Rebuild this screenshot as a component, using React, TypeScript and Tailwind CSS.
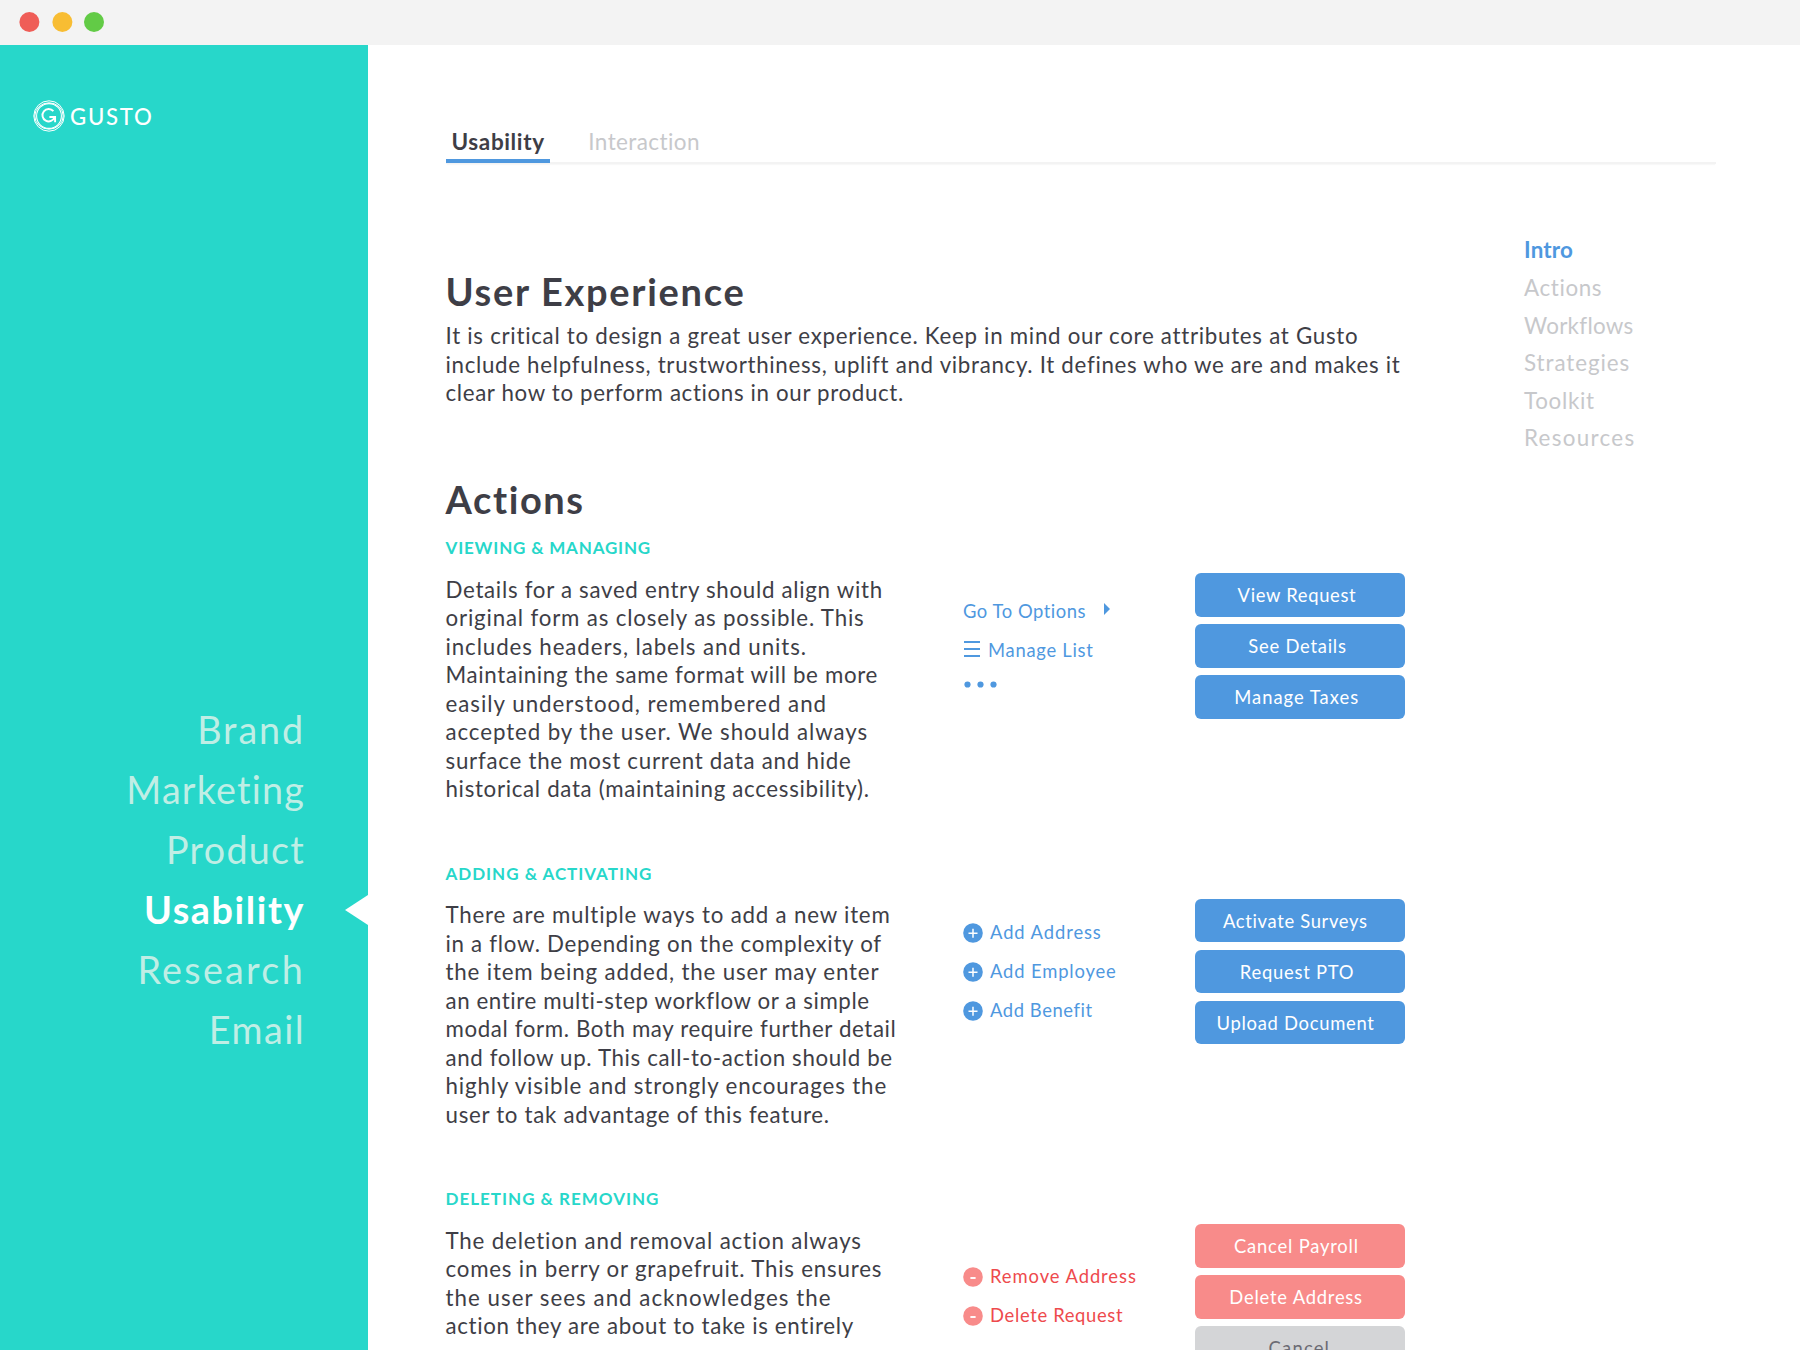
import type { ReactNode } from "react";

type Line = [text: string, tracking: string];

const sideNav: Line[] = [
  ["Brand", "tracking-[1.9px]"],
  ["Marketing", "tracking-[1.2px]"],
  ["Product", "tracking-[1.24px]"],
  ["Usability", "tracking-[1.6px]"],
  ["Research", "tracking-[2.3px]"],
  ["Email", "tracking-[1.45px]"],
];

const pageNav: Line[] = [
  ["Intro", "tracking-[0.2px]"],
  ["Actions", "tracking-[0.62px]"],
  ["Workflows", "tracking-[0.28px]"],
  ["Strategies", "tracking-[0.92px]"],
  ["Toolkit", "tracking-[0.68px]"],
  ["Resources", "tracking-[1.3px]"],
];

const intro: Line[] = [
  ["It is critical to design a great user experience. Keep in mind our core attributes at Gusto", "tracking-[0.72px]"],
  ["include helpfulness, trustworthiness, uplift and vibrancy. It defines who we are and makes it", "tracking-[0.69px]"],
  ["clear how to perform actions in our product.", "tracking-[0.65px]"],
];

const viewing: Line[] = [
  ["Details for a saved entry should align with", "tracking-[0.7px]"],
  ["original form as closely as possible. This", "tracking-[0.82px]"],
  ["includes headers, labels and units.", "tracking-[0.9px]"],
  ["Maintaining the same format will be more", "tracking-[0.67px]"],
  ["easily understood, remembered and", "tracking-[0.99px]"],
  ["accepted by the user. We should always", "tracking-[0.91px]"],
  ["surface the most current data and hide", "tracking-[0.742px]"],
  ["historical data (maintaining accessibility).", "tracking-[0.678px]"],
];

const adding: Line[] = [
  ["There are multiple ways to add a new item", "tracking-[0.79px]"],
  ["in a flow. Depending on the complexity of", "tracking-[0.7px]"],
  ["the item being added, the user may enter", "tracking-[0.84px]"],
  ["an entire multi-step workflow or a simple", "tracking-[0.59px]"],
  ["modal form. Both may require further detail", "tracking-[0.62px]"],
  ["and follow up. This call-to-action should be", "tracking-[0.64px]"],
  ["highly visible and strongly encourages the", "tracking-[0.86px]"],
  ["user to tak advantage of this feature.", "tracking-[0.7px]"],
];

const deleting: Line[] = [
  ["The deletion and removal action always", "tracking-[0.83px]"],
  ["comes in berry or grapefruit. This ensures", "tracking-[0.79px]"],
  ["the user sees and acknowledges the", "tracking-[1.024px]"],
  ["action they are about to take is entirely", "tracking-[0.67px]"],
];

function Copy({ lines }: { lines: Line[] }) {
  return (
    <p className="text-[22.3px] leading-[28.5px] text-[#3e3e46]">
      {lines.map(([text, tracking]) => (
        <span key={text} className={`block whitespace-nowrap ${tracking}`}>
          {text}
        </span>
      ))}
    </p>
  );
}

function Section({ title, lines, links, buttons }: { title: Line; lines: Line[]; links: ReactNode; buttons: ReactNode }) {
  return (
    <section className="flex h-[325.5px]">
      <div className="w-[517.5px]">
        <h3 className={`mb-[17.2px] text-[17px] leading-5 font-bold whitespace-nowrap text-[#27d7ca] ${title[1]}`}>{title[0]}</h3>
        <Copy lines={lines} />
      </div>
      <div className="w-[232.4px]">{links}</div>
      <div className="flex w-[210px] flex-col gap-[7.5px] pt-[34.7px]">{buttons}</div>
    </section>
  );
}

function Button({ label, className, tone = "bg-[#4f98df] text-white" }: { label: string; className: string; tone?: string }) {
  return (
    <button className={`h-[43.5px] shrink-0 rounded-[6px] pt-[2px] text-center text-[18.4px] leading-[41.5px] whitespace-nowrap ${tone} ${className}`}>
      {label}
    </button>
  );
}

function BadgeLink({ label, tracking, kind }: { label: string; tracking: string; kind: "add" | "remove" }) {
  const add = kind === "add";
  return (
    <li className={`flex h-[39px] items-center gap-[7px] ${add ? "text-[#4f98df]" : "text-[#ee4a4d]"}`}>
      <svg width="20" height="20" viewBox="0 0 20 20" className="shrink-0">
        <circle cx="10" cy="10" r="9.8" fill={add ? "#4f98df" : "#f88b8a"} />
        {add ? (
          <path d="M10 5.8v9M5.5 10.3h9" stroke="#fff" strokeWidth="1.5" />
        ) : (
          <path d="M7.4 11h5.2" stroke="#fff" strokeWidth="1.9" />
        )}
      </svg>
      <span className={`text-[18.4px] leading-[39px] whitespace-nowrap ${tracking}`}>{label}</span>
    </li>
  );
}

function Logo() {
  return (
    <div className="ml-[33px] flex items-center">
      <svg width="32" height="32" viewBox="0 0 32 32" fill="none" stroke="#fff" className="shrink-0">
        <circle cx="16" cy="16" r="15.2" strokeWidth="1" />
        <ellipse cx="16" cy="16" rx="14.2" ry="13.2" strokeWidth="1" />
        <circle cx="16" cy="16" r="12.4" strokeWidth="1.1" />
        <path d="M20.4 11.2A6.2 6.2 0 1 0 21.6 17H16.4M19 17H22.1v5.2" strokeWidth="1.9" />
      </svg>
      <span className="ml-[5px] text-[22.2px] leading-[31px] font-medium tracking-[1.7px] text-white">GUSTO</span>
    </div>
  );
}

export default function App() {
  return (
    <div className="flex h-[1350px] w-[1800px] flex-col overflow-hidden bg-white font-['Lato',sans-serif]">
      <header className="flex h-[45px] shrink-0 items-center bg-[#f3f3f3] pb-px pl-[19px]">
        <svg width="86" height="20" viewBox="0 0 86 20">
          <circle cx="10.4" cy="10" r="10" fill="#ef5d57" />
          <circle cx="43.4" cy="10" r="10" fill="#f8bd33" />
          <circle cx="75" cy="10" r="10" fill="#62cb46" />
        </svg>
      </header>

      <div className="flex min-h-0 flex-1">
        <aside className="flex w-[368px] shrink-0 flex-col bg-[#27d7ca] pt-[55px]">
          <Logo />
          <nav className="mt-[568px]">
            {sideNav.map(([label, tracking]) =>
              label === "Usability" ? (
                <a key={label} className={`flex h-[60px] items-center justify-end text-[37.7px] leading-[60px] font-bold text-white ${tracking}`}>
                  {label}
                  <svg width="23" height="30" viewBox="0 0 23 30" className="ml-10">
                    <path d="M23 0v30L0 15z" fill="#fff" />
                  </svg>
                </a>
              ) : (
                <a key={label} className={`block h-[60px] pr-[63px] text-right text-[37.7px] leading-[60px] text-[#bfeee5] ${tracking}`}>
                  {label}
                </a>
              ),
            )}
          </nav>
        </aside>

        <main className="flex-1 pl-[77.5px]">
          <nav className="flex h-[119px] w-[1270px] items-end border-b-2 border-[#f3f3f3] text-[22.5px] leading-7 shadow-[0_2px_1px_-1px_#f8f8f8]">
            <a className="-mb-px h-[41px] w-[104.8px] border-b-4 border-[#4f98df] pt-[6px] pl-[6px] font-bold tracking-[0.62px] text-[#3e3e46]">Usability</a>
            <a className="ml-[38px] h-[40px] pt-[6px] tracking-[0.4px] text-[#c7c8cb]">Interaction</a>
          </nav>

          <div className="flex">
            <div className="w-[960px] shrink-0">
              <h1 className="mt-[105.4px] text-[38px] leading-[44px] font-bold tracking-[1.7px] text-[#3e3e46]">User Experience</h1>
              <div className="mt-[9px]">
                <Copy lines={intro} />
              </div>
              <h2 className="mt-[69.5px] mb-[17px] text-[38px] leading-[44px] font-bold tracking-[1.6px] text-[#3e3e46]">Actions</h2>

              <Section
                title={["VIEWING & MANAGING", "tracking-[0.82px]"]}
                lines={viewing}
                links={
                  <ul className="pt-[53.2px] text-[18.4px] leading-[39px] whitespace-nowrap text-[#4f98df]">
                    <li className="flex h-[39px] items-center tracking-[0.54px]">
                      Go To Options
                      <svg width="6" height="12" viewBox="0 0 6 12" className="ml-[18px] -translate-y-[2px]">
                        <path d="M0 0l6 6-6 6z" fill="currentColor" />
                      </svg>
                    </li>
                    <li className="flex h-[39px] items-center pl-px tracking-[0.73px]">
                      <svg width="16" height="16" viewBox="0 0 16 16" className="mr-2 -translate-y-px">
                        <path d="M0 1h16M0 8h16M0 15h16" stroke="currentColor" strokeWidth="2" />
                      </svg>
                      Manage List
                    </li>
                    <li className="pt-[11px] pl-px">
                      <svg width="34" height="7" viewBox="0 0 34 7" fill="currentColor">
                        <circle cx="3.5" cy="3.5" r="3.1" />
                        <circle cx="16.5" cy="3.5" r="3.1" />
                        <circle cx="29.5" cy="3.5" r="3.1" />
                      </svg>
                    </li>
                  </ul>
                }
                buttons={
                  <>
                    <Button label="View Request" className="pr-[6.8px] tracking-[0.67px]" />
                    <Button label="See Details" className="pr-[5.8px] tracking-[0.75px]" />
                    <Button label="Manage Taxes" className="pr-[7.4px] tracking-[0.99px]" />
                  </>
                }
              />

              <Section
                title={["ADDING & ACTIVATING", "tracking-[0.98px]"]}
                lines={adding}
                links={
                  <ul className="pt-[49.6px]">
                    <BadgeLink kind="add" label="Add Address" tracking="tracking-[0.91px]" />
                    <BadgeLink kind="add" label="Add Employee" tracking="tracking-[0.85px]" />
                    <BadgeLink kind="add" label="Add Benefit" tracking="tracking-[0.58px]" />
                  </ul>
                }
                buttons={
                  <>
                    <Button label="Activate Surveys" className="pr-[10.3px] tracking-[0.66px]" />
                    <Button label="Request PTO" className="pr-[6.6px] tracking-[0.75px]" />
                    <Button label="Upload Document" className="pr-[9.7px] tracking-[0.71px]" />
                  </>
                }
              />

              <Section
                title={["DELETING & REMOVING", "tracking-[1px]"]}
                lines={deleting}
                links={
                  <ul className="pt-[68.1px]">
                    <BadgeLink kind="remove" label="Remove Address" tracking="tracking-[0.93px]" />
                    <BadgeLink kind="remove" label="Delete Request" tracking="tracking-[0.66px]" />
                  </ul>
                }
                buttons={
                  <>
                    <Button label="Cancel Payroll" className="pr-[7.9px] tracking-[0.8px]" tone="bg-[#f88b8a] text-white" />
                    <Button label="Delete Address" className="pr-[8.6px] tracking-[0.77px]" tone="bg-[#f88b8a] text-white" />
                    <Button label="Cancel" className="pr-[2px] tracking-[1.2px]" tone="bg-[#d4d5d7] text-[#6b6b73]" />
                  </>
                }
              />
            </div>

            <nav className="mt-[67.4px] ml-[118.5px]">
              {pageNav.map(([label, tracking]) => (
                <a
                  key={label}
                  className={`block text-[22.4px] leading-[37.6px] ${tracking} ${label === "Intro" ? "font-bold text-[#4f98df]" : "text-[#c7c8cb]"}`}
                >
                  {label}
                </a>
              ))}
            </nav>
          </div>
        </main>
      </div>
    </div>
  );
}
